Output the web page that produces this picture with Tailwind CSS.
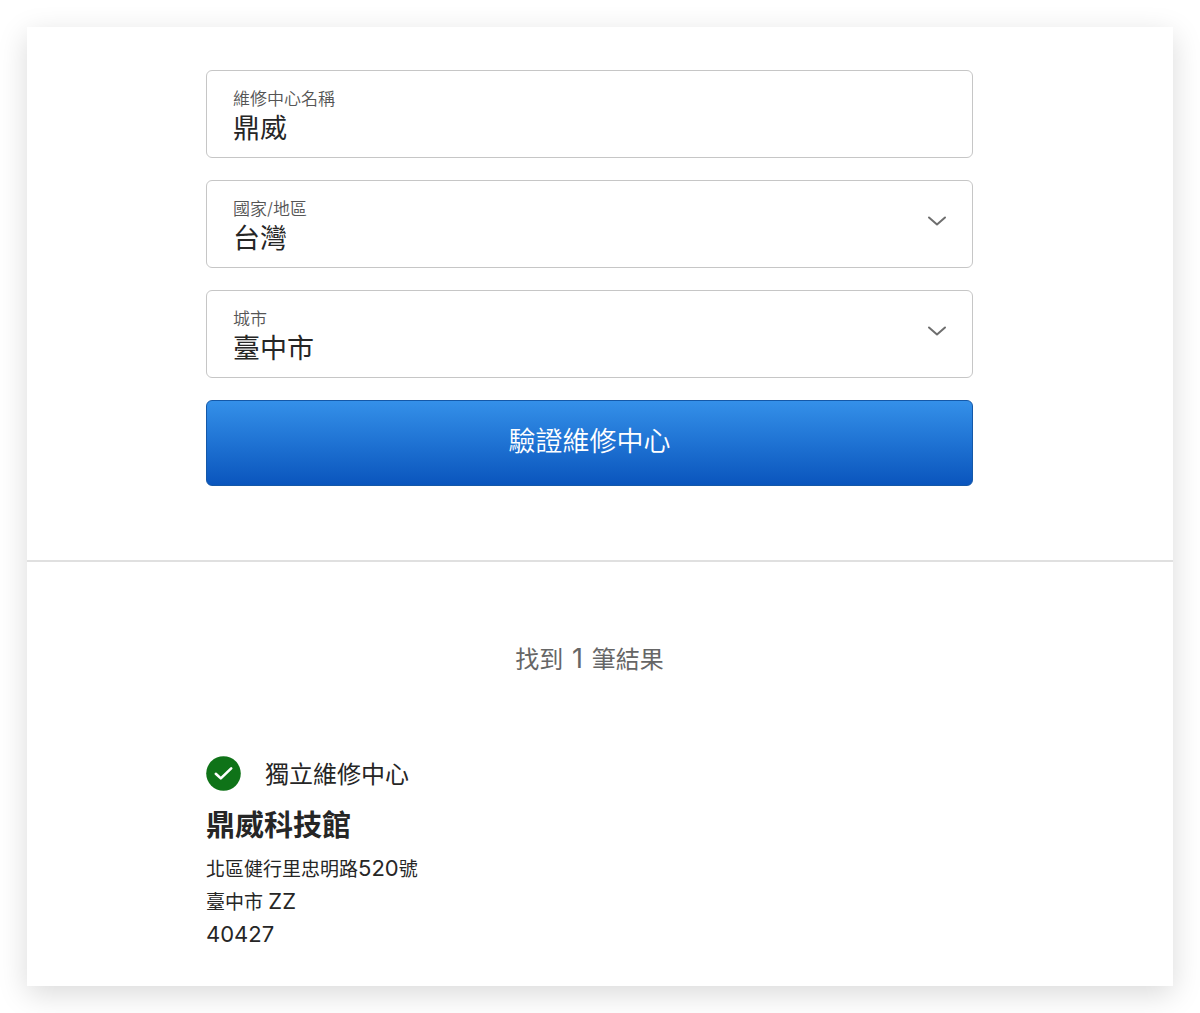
<!DOCTYPE html>
<html lang="zh-Hant">
<head>
    <meta charset="UTF-8">
    <meta name="viewport" content="width=device-width, initial-scale=1.0">
    <title>驗證維修中心</title>
    <script src="https://cdn.jsdelivr.net/npm/@tailwindcss/browser@4"></script>
</head>
<body class="bg-white p-[27px] font-[Inter,'Noto_Sans_CJK_TC',sans-serif] text-[#262626]">
    <main class="bg-white shadow-[0_8px_28px_rgba(0,0,0,0.15)]">
        <form class="flex flex-col gap-[22px] border-b-2 border-[#e0e0e0] pt-[43px] pr-[200px] pb-[74px] pl-[179px]">
            <div class="flex h-[88px] flex-col rounded-md border border-[#c6c6c6] px-[26px] pt-[18px]">
                <label for="center-name" class="text-[17px] leading-[20px] font-[350] text-[#555]">維修中心名稱</label>
                <input id="center-name" type="text" value="鼎威" class="h-[40px] w-full text-[27px] leading-[40px] outline-none">
            </div>

            <div class="relative flex h-[88px] flex-col rounded-md border border-[#c6c6c6] px-[26px] pt-[18px]">
                <label for="country" class="text-[17px] leading-[20px] font-[350] text-[#555]">國家/地區</label>
                <select id="country" class="h-[40px] w-full appearance-none text-[27px] leading-[40px] outline-none">
                    <option>台灣</option>
                </select>
                <svg class="pointer-events-none absolute top-[34px] right-[25px] h-3 w-5" viewBox="0 0 20 12" fill="none" stroke="#6e6e6e" stroke-width="2" stroke-linecap="round" stroke-linejoin="round">
                    <path d="M2 2.5l8 7 8-7"/>
                </svg>
            </div>

            <div class="relative flex h-[88px] flex-col rounded-md border border-[#c6c6c6] px-[26px] pt-[18px]">
                <label for="city" class="text-[17px] leading-[20px] font-[350] text-[#555]">城市</label>
                <select id="city" class="h-[40px] w-full appearance-none text-[27px] leading-[40px] outline-none">
                    <option>臺中市</option>
                </select>
                <svg class="pointer-events-none absolute top-[34px] right-[25px] h-3 w-5" viewBox="0 0 20 12" fill="none" stroke="#6e6e6e" stroke-width="2" stroke-linecap="round" stroke-linejoin="round">
                    <path d="M2 2.5l8 7 8-7"/>
                </svg>
            </div>

            <button type="button" class="h-[86px] rounded-md border border-[#1458a8] bg-linear-to-b from-[#3490e9] to-[#0a55bd] pb-0.5 text-[27px] font-[350] text-white">驗證維修中心</button>
        </form>

        <section class="pt-[78px] pr-[200px] pb-[34px] pl-[179px]">
            <p class="text-center text-[24px] leading-[40px] text-[#666]">找到 <span class="mx-0.5 text-[27px] leading-none">1</span> 筆結果</p>

            <div class="mt-[75px] flex items-center gap-6">
                <svg class="mb-[3px] h-[35px] w-[35px]" viewBox="0 0 35 35" fill="none">
                    <circle cx="17.5" cy="17.5" r="17.3" fill="#0f7318"/>
                    <path d="M9.8 17.8l5 4.6 10.4-10" stroke="#fff" stroke-width="2.6" stroke-linecap="round" stroke-linejoin="round"/>
                </svg>
                <span class="text-[24px] leading-[40px]">獨立維修中心</span>
            </div>
            <h2 class="mt-[9px] text-[29px] leading-[44px] font-bold">鼎威科技館</h2>
            <address class="mt-[5px] text-[19px] leading-[33px] not-italic">
                北區健行里忠明路<span class="text-[22px] leading-none">520</span>號<br>
                臺中市 <span class="text-[22px] leading-none">ZZ</span><br>
                <span class="text-[22px] leading-none">40427</span>
            </address>
        </section>
    </main>
</body>
</html>
